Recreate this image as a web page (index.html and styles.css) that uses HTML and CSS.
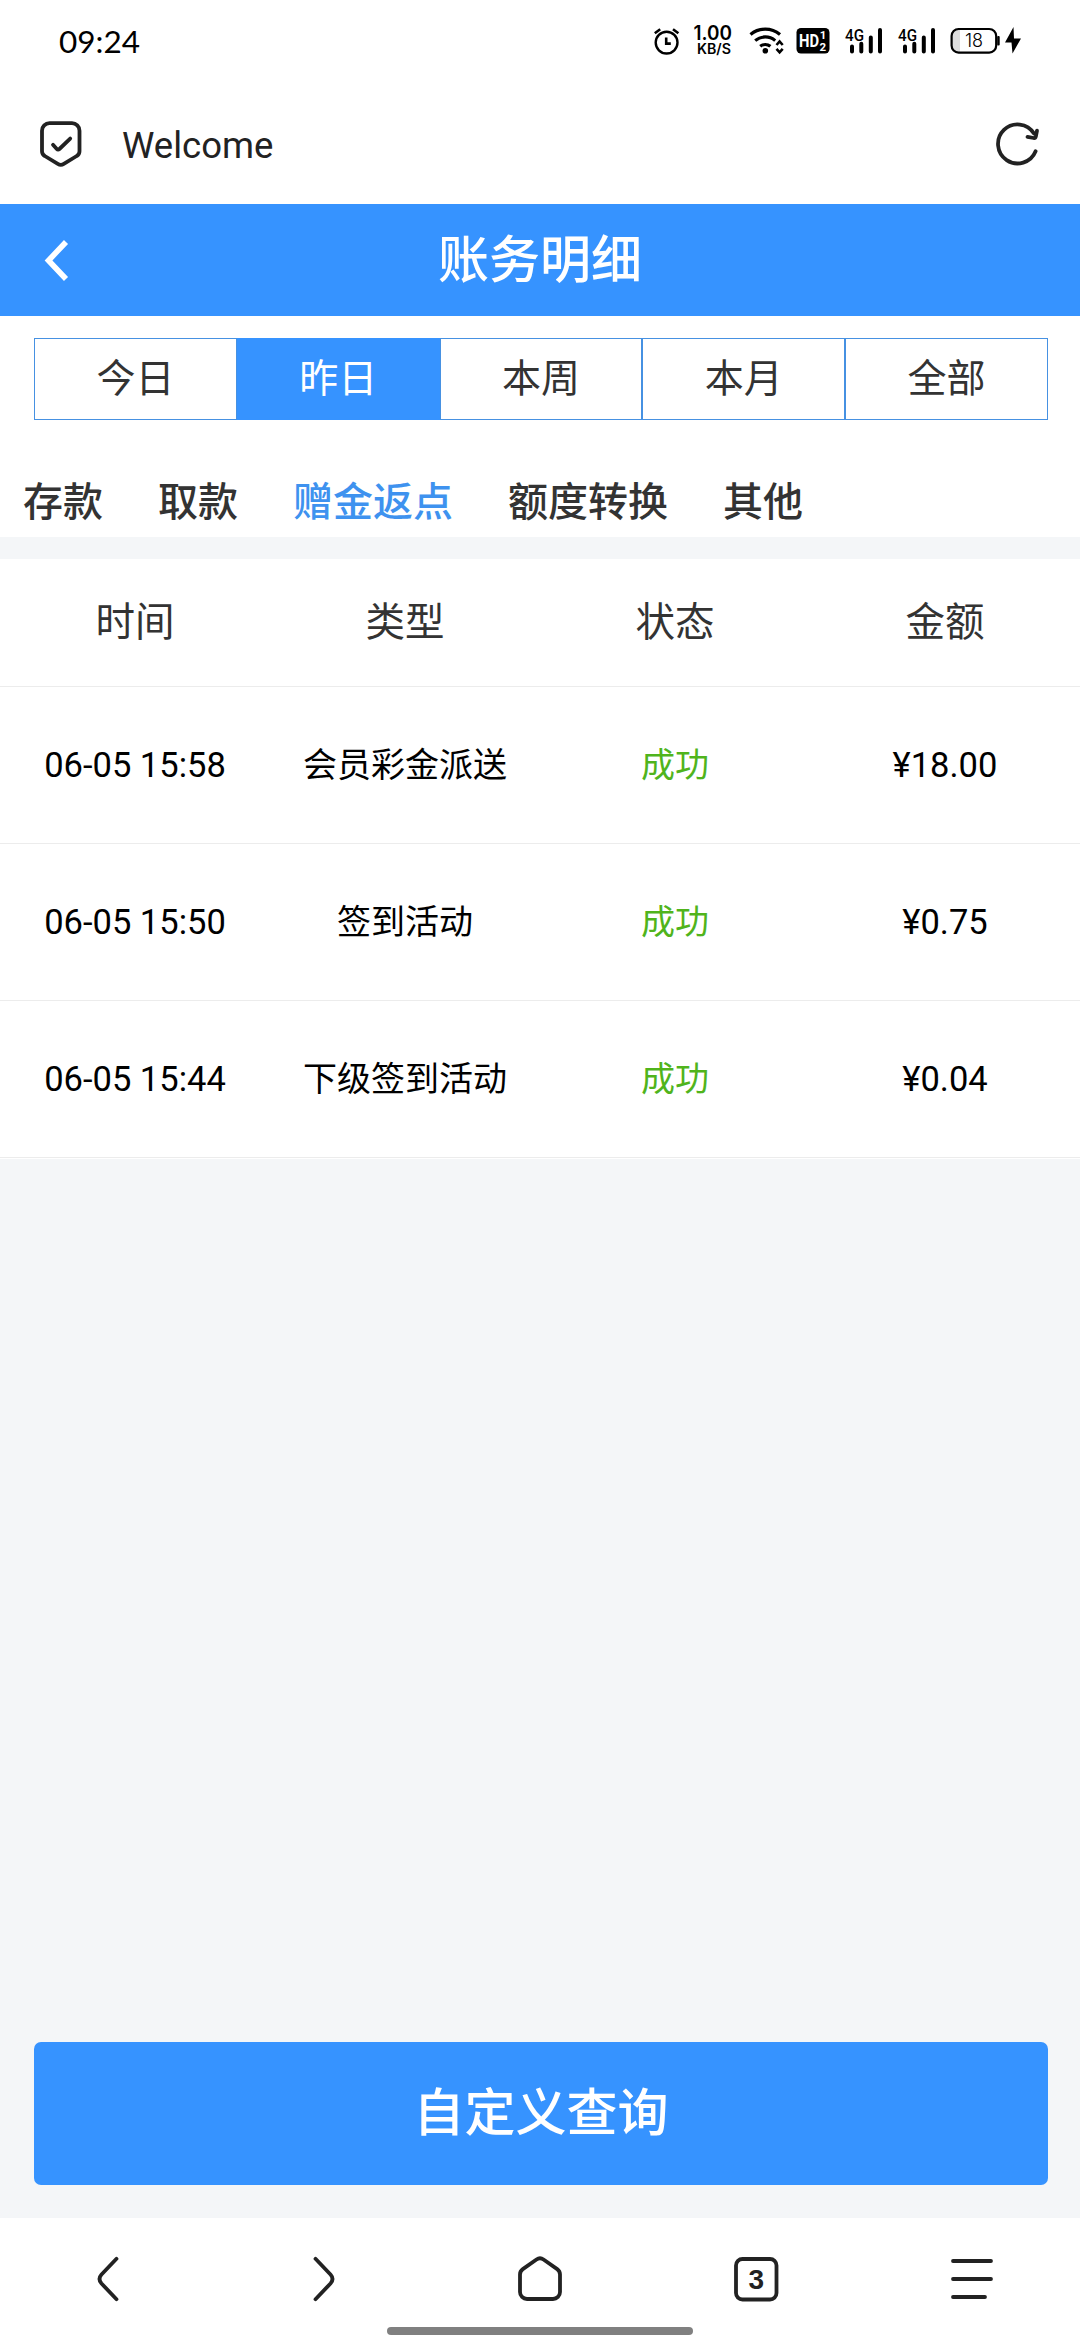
FILE: index.html
```html
<!DOCTYPE html>
<html lang="zh-CN">
<head>
<meta charset="utf-8">
<title>账务明细</title>
<link rel="stylesheet" href="styles.css">
</head>
<body>
<div class="screen">
  <div class="status">
    <div class="clock">09:24</div>
    <div class="indicators">
      <svg class="i-alarm" width="27" height="32" viewBox="0 0 27 32" fill="none" stroke="#000">
        <circle cx="13.6" cy="17.6" r="10.9" stroke-width="2.4"/>
        <path d="M1.8 8.2 7.2 4.2M25.4 8.2 20 4.2" stroke-width="2.6"/>
        <path d="M13.2 12.4v6.2h4.6" stroke-width="2.6"/>
      </svg>
      <svg class="i-speed" width="40" height="42" viewBox="0 0 40 42">
        <text class="speed-num" x="0.5" y="20" textLength="38.5" lengthAdjust="spacingAndGlyphs">1.00</text>
        <text class="speed-unit" x="4" y="34" textLength="34" lengthAdjust="spacingAndGlyphs">KB/S</text>
      </svg>
      <svg class="i-wifi" width="36" height="32" viewBox="0 0 36 32" fill="none" stroke="#000">
        <path d="M1.5 9.5a23 23 0 0 1 29.5 0M6.2 15.6a15.5 15.5 0 0 1 20 0M11.2 21.3a8.2 8.2 0 0 1 10.2 0" stroke-width="3.2"/>
        <circle cx="16.3" cy="25.8" r="2.8" fill="#000" stroke="none"/>
        <path d="M27.500 20 30.600 16.500l3.100 3.500M27.500 23.800l3.100 3.500 3.100-3.500" stroke-width="2.600"/>
      </svg>
      <svg class="i-hd" width="34" height="32" viewBox="0 0 34 32">
        <rect x="0.5" y="3" width="33" height="25.5" rx="4.5"/>
        <text class="hd-main" x="3" y="22.3" textLength="20" lengthAdjust="spacingAndGlyphs">HD</text>
        <text class="hd-sub" x="23.8" y="14.4">1</text>
        <text class="hd-sub" x="23.4" y="25.8">2</text>
      </svg>
      <svg class="i-sig" width="40" height="32" viewBox="0 0 40 32">
        <text class="sig-txt" x="1" y="15.5" textLength="19" lengthAdjust="spacingAndGlyphs">4G</text>
        <path d="M8 21.5v5M17.3 18.8v7.7M26.8 12.5v14M36 5v21.5" stroke="#000" stroke-width="4" stroke-linecap="round"/>
      </svg>
      <svg class="i-sig2" width="40" height="32" viewBox="0 0 40 32">
        <text class="sig-txt" x="1" y="15.5" textLength="19" lengthAdjust="spacingAndGlyphs">4G</text>
        <path d="M8 21.5v5M17.3 18.8v7.7M26.8 12.5v14M36 5v21.5" stroke="#000" stroke-width="4" stroke-linecap="round"/>
      </svg>
      <svg class="i-bat" width="51" height="32" viewBox="0 0 51 32">
        <path d="M8 4.5h2v22.5h-2a6 6 0 0 1-6-6v-10.500a6 6 0 0 1 6-6z" fill="#ddd"/>
        <rect x="1.6" y="4" width="44.6" height="23.600" rx="7" fill="none" stroke="#000" stroke-width="2.2"/>
        <rect x="47.200" y="11" width="2.500" height="9.500" rx="1"/>
        <text class="bat-txt" x="24" y="22" text-anchor="middle">18</text>
      </svg>
      <svg class="i-bolt" width="18" height="32" viewBox="0 0 18 32">
        <path d="M9.500 2 1 17.500h6.500L8.500 28.500 17 13.500h-7z"/>
      </svg>
    </div>
  </div>

  <div class="address">
    <svg width="42" height="48" viewBox="0 0 42 48" fill="none" stroke="#222" stroke-width="3.8" stroke-linecap="round" stroke-linejoin="round">
      <path d="M9.500 3.200h22.500a7.500 7.500 0 0 1 7.500 7.500v20.500q0 3.200-2.800 4.800l-12.900 7.900q-3 1.800-6 0L4.800 36Q2 34.400 2 31.200V10.700a7.500 7.500 0 0 1 7.500-7.500z"/>
      <path d="M13 24.800l3.800 4.200q1.200 1.300 2.600 0L30.200 18.600"/>
    </svg>
    <div class="site">Welcome</div>
    <svg width="48" height="48" viewBox="0 0 48 48" fill="none" stroke="#222" stroke-width="3.800" stroke-linecap="round" stroke-linejoin="round">
      <path d="M42.600 31.300A19.500 19.500 0 1 1 41 13.500"/>
      <path d="M34.500 16.800l6.300 1.200q1.600.2 2-1.400l1.200-6"/>
    </svg>
  </div>

  <header class="title-bar">
    <svg class="back" width="26" height="42" viewBox="0 0 26 42" fill="none" stroke="#fff" stroke-width="5.600"><path d="M23 3 5.500 21.500 23 40"/></svg>
    <h1 class="title">账务明细</h1>
  </header>

  <section class="filters">
    <div class="ranges">
      <div class="range">今日</div>
      <div class="range range-on">昨日</div>
      <div class="range">本周</div>
      <div class="range">本月</div>
      <div class="range">全部</div>
    </div>
    <nav class="kinds">
      <span>存款</span>
      <span>取款</span>
      <span class="kind-on">赠金返点</span>
      <span>额度转换</span>
      <span>其他</span>
    </nav>
  </section>

  <main class="content">
    <div class="table">
      <div class="row head"><div>时间</div><div>类型</div><div>状态</div><div>金额</div></div>
      <div class="row"><div class="num">06-05 15:58</div><div>会员彩金派送</div><div class="ok">成功</div><div class="num">¥18.00</div></div>
      <div class="row"><div class="num">06-05 15:50</div><div>签到活动</div><div class="ok">成功</div><div class="num">¥0.75</div></div>
      <div class="row"><div class="num">06-05 15:44</div><div>下级签到活动</div><div class="ok">成功</div><div class="num">¥0.04</div></div>
    </div>
    <div class="query">自定义查询</div>
  </main>

  <footer class="browser-bar">
    <div class="nav">
      <svg width="48" height="48" viewBox="0 0 48 48"><path d="M32.500 3.800 17.500 19.500q-4 4.500 0 9L32.500 44.200"/></svg>
      <svg width="48" height="48" viewBox="0 0 48 48"><path d="M15.500 3.800 30.500 19.500q4 4.500 0 9L15.500 44.200"/></svg>
      <svg width="48" height="48" viewBox="0 0 48 48"><path d="M4 19.500q0-3.400 2.800-5.400L20.500 4.500q3.500-2.400 7 0l13.700 9.600q2.800 2 2.800 5.400v17.500a7 7 0 0 1-7 7H11a7 7 0 0 1-7-7z"/></svg>
      <svg width="48" height="48" viewBox="0 0 48 48"><rect x="4" y="4" width="40.500" height="40.500" rx="6.500"/><text class="tab-count" x="24.200" y="34" text-anchor="middle">3</text></svg>
      <svg width="48" height="48" viewBox="0 0 48 48"><path d="M5 6h38M5 24h38M5 42h32"/></svg>
    </div>
    <div class="home-bar"></div>
  </footer>
</div>
</body>
</html>
```
FILE: styles.css
```css
* { box-sizing: border-box; }
body {
  margin: 0;
  background: #fff;
  font-family: Roboto, "Noto Sans CJK SC", sans-serif;
  color: #000;
}
svg { display: block; flex: none; }
.screen {
  width: 1080px;
  height: 2340px;
  display: flex;
  flex-direction: column;
  overflow: hidden;
}

/* phone status bar */
.status {
  height: 84px;
  padding: 0 58px 3px 59px;
  display: flex;
  justify-content: space-between;
  align-items: center;
}
.clock { font: 31.5px/40px Lato, sans-serif; }
.indicators { display: flex; align-items: center; }
.i-speed { margin-left: 13px; }
.i-wifi { margin-left: 16px; }
.i-hd { margin-left: 11px; }
.i-sig { margin-left: 14px; }
.i-sig2 { margin-left: 13px; }
.i-bat { margin-left: 13px; }
.i-bolt { margin-left: 3px; }
.speed-num { font: 600 19.5px Inter, sans-serif; }
.speed-unit { font: 600 14px Inter, sans-serif; }
.hd-main { font: 700 19px Roboto, sans-serif; fill: #fff; }
.hd-sub { font: 700 11.5px Roboto, sans-serif; fill: #fff; }
.sig-txt { font: 500 16.5px Roboto, sans-serif; }
.bat-txt { font: 300 18px Inter, sans-serif; }

/* browser address bar */
.address {
  height: 120px;
  padding: 0 39px 0 40px;
  display: flex;
  align-items: center;
}
.site {
  flex: 1;
  padding: 2px 0 0 40px;
  font-size: 36.5px;
  color: #222;
}

.title-bar {
  height: 112px;
  padding: 0 43px;
  display: grid;
  grid-template-columns: 26px 1fr 26px;
  align-items: center;
  background: #3693ff;
}
.title {
  margin: 0;
  padding-top: 2px;
  text-align: center;
  font-size: 51px;
  font-weight: 500;
  line-height: 60px;
  color: #fff;
}

.filters {
  height: 221px;
  padding-top: 22px;
}
.ranges {
  display: flex;
  height: 82px;
  margin: 0 32px 0 34px;
}
.range {
  flex: 1;
  border: 1px solid #4691e2;
  text-align: center;
  font-size: 39px;
  line-height: 81px;
  color: #333;
}
.range-on {
  background: #3693ff;
  border-color: #3693ff;
  color: #fff;
}
.kinds {
  display: flex;
  gap: 55px;
  padding: 53px 0 0 23px;
  font-size: 40px;
  line-height: 60px;
  font-weight: 500;
  color: #333;
}
.kind-on { color: #3e92ef; }

.content {
  flex: 1;
  display: flex;
  flex-direction: column;
  justify-content: space-between;
  padding: 22px 0 33px;
  background: #f4f6f8;
}
.table { background: #fff; padding-bottom: 1px; }
.row {
  height: 157px;
  display: grid;
  grid-template-columns: repeat(4, 1fr);
  align-items: center;
  text-align: center;
  border-bottom: 1px solid #ececec;
  font-size: 34px;
  line-height: 50px;
}
.head {
  height: 128px;
  font-size: 39.5px;
  color: #333;
}
.num { font-size: 34.5px; }
.ok { color: #50b41c; }
.query {
  height: 143px;
  margin: 0 32px 0 34px;
  border-radius: 7px;
  background: #3693ff;
  color: #fff;
  text-align: center;
  font-size: 51px;
  font-weight: 500;
  line-height: 144px;
}

/* browser bottom bar */
.browser-bar {
  height: 122px;
  display: flex;
  flex-direction: column;
  align-items: center;
}
.nav {
  width: 100%;
  padding-top: 37px;
  display: grid;
  grid-template-columns: repeat(5, 1fr);
  justify-items: center;
  fill: none;
  stroke: #222;
  stroke-width: 3.8;
  stroke-linecap: round;
  stroke-linejoin: round;
}
.tab-count {
  font: 700 28px "Liberation Sans", sans-serif;
  fill: #222;
  stroke: none;
}
.home-bar {
  width: 306px;
  height: 8px;
  margin-top: 24px;
  border-radius: 4px;
  background: #808080;
}
```
